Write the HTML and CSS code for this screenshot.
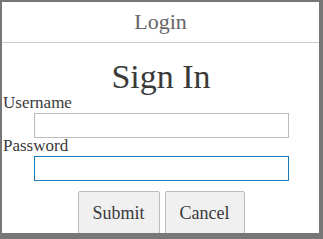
FILE: index.html
```html
<!DOCTYPE html>
<html lang="en">
<head>
    <meta charset="UTF-8">
    <meta name="viewport" content="width=device-width, initial-scale=1.0">
    <title>Login</title>
    <link rel="stylesheet" href="styles.css">
</head>
<body>
    <div class="dialog">
        <div class="dialog-title">Login</div>
        <form class="login-form">
            <h1>Sign In</h1>
            <label for="username">Username</label>
            <input type="text" id="username" class="field">
            <label for="password">Password</label>
            <input type="password" id="password" class="field focused">
            <div class="actions">
                <button type="button">Submit</button>
                <button type="button">Cancel</button>
            </div>
        </form>
    </div>
</body>
</html>
```

FILE: styles.css
```css
* {
    margin: 0;
    padding: 0;
    box-sizing: border-box;
}
body {
    background: #777;
    font-family: "Liberation Serif", serif;
    color: #3a3a3a;
}
.dialog {
    margin: 2px 4px 0 2px;
    height: 231px;
    background: #fff;
    overflow: hidden;
}
.dialog-title {
    height: 41px;
    line-height: 40px;
    border-bottom: 1px solid #ccc;
    text-align: center;
    font-size: 22px;
    color: #666;
}
.login-form {
    padding-left: 1px;
}
h1 {
    font-weight: normal;
    font-size: 34px;
    line-height: 36px;
    text-align: center;
    margin-top: 16px;
}
label {
    display: block;
    font-size: 17px;
    line-height: 18px;
    margin-top: -1px;
}
.field {
    display: block;
    width: 255px;
    height: 25px;
    margin-left: 31px;
    margin-top: 1px;
    border: 1px solid #bbb;
    outline: none;
    font: inherit;
}
.field.focused {
    border-color: #1a7ab8;
}
.actions {
    display: flex;
    justify-content: center;
    gap: 5px;
    margin-top: 10px;
}
.actions button {
    font-family: inherit;
    font-size: 18px;
    line-height: 22px;
    color: #3a3a3a;
    padding: 10px 14px 14px;
    background: #f0f0f0;
    border: 1px solid #bbb;
    border-radius: 2px;
}
```
